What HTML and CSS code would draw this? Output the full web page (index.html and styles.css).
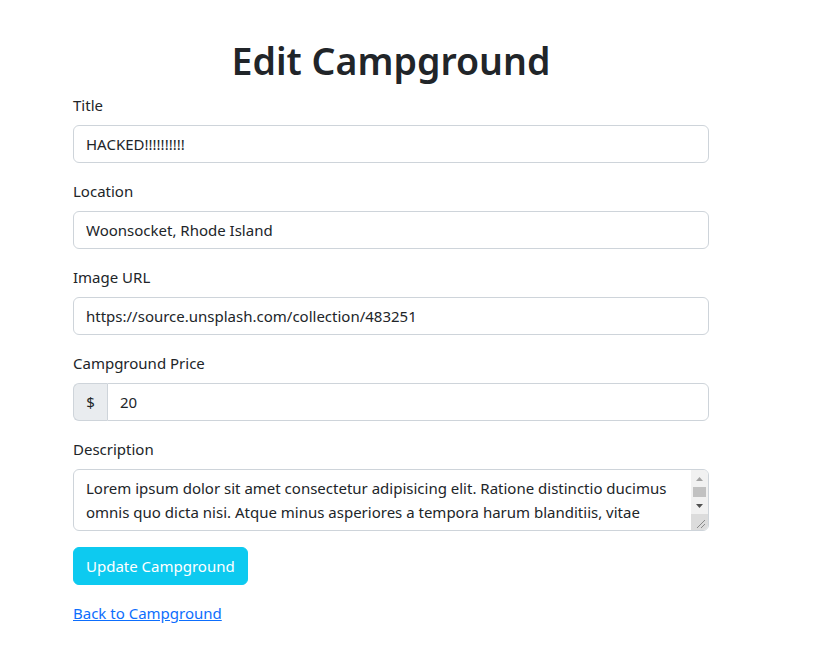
FILE: index.html
```html
<!DOCTYPE html>
<html lang="en">
<head>
<meta charset="utf-8">
<title>Edit Campground</title>
<link rel="stylesheet" href="styles.css">
</head>
<body>
<main class="page">
  <h1 class="page-title">Edit Campground</h1>
  <form class="edit-form">
    <div class="field">
      <label class="field-label" for="title">Title</label>
      <input class="field-input" id="title" type="text" value="HACKED!!!!!!!!!!">
    </div>
    <div class="field">
      <label class="field-label" for="location">Location</label>
      <input class="field-input" id="location" type="text" value="Woonsocket, Rhode Island">
    </div>
    <div class="field">
      <label class="field-label" for="image">Image URL</label>
      <input class="field-input" id="image" type="text" value="https://source.unsplash.com/collection/483251">
    </div>
    <div class="field">
      <label class="field-label" for="price">Campground Price</label>
      <div class="input-group">
        <span class="input-addon">$</span>
        <input class="field-input group-input" id="price" type="text" value="20">
      </div>
    </div>
    <div class="field">
      <label class="field-label" for="description">Description</label>
      <div class="textarea-wrap">
        <textarea class="field-input field-textarea" id="description" rows="2">Lorem ipsum dolor sit amet consectetur adipisicing elit. Ratione distinctio ducimus omnis quo dicta nisi. Atque minus asperiores a tempora harum blanditiis, vitae quisquam eius voluptatibus sint repellendus, fugit nemo iusto tenetur commodi ipsam.</textarea>
        <div class="fake-scrollbar" aria-hidden="true">
          <div class="sb-button">
            <svg width="7" height="4" viewBox="0 0 7 4"><polygon points="3.5,0 7,4 0,4" fill="#a3a3a3"/></svg>
          </div>
          <div class="sb-track"><div class="sb-thumb"></div></div>
          <div class="sb-button">
            <svg width="7" height="4" viewBox="0 0 7 4"><polygon points="0,0 7,0 3.5,4" fill="#505050"/></svg>
          </div>
          <div class="sb-corner">
            <svg width="16" height="16" viewBox="0 0 16 16"><path d="M14 6 L6 14 M14 10 L10 14" stroke="#8a8a8a" stroke-width="1"/></svg>
          </div>
        </div>
      </div>
    </div>
    <div class="actions">
      <button class="btn-update" type="button">Update Campground</button>
    </div>
  </form>
  <a class="back-link" href="#">Back to Campground</a>
</main>
</body>
</html>
```
FILE: styles.css
```css
* { box-sizing: border-box; }
html, body { margin: 0; padding: 0; background: #fff; }
body {
  font-family: "Noto Sans", "Open Sans", sans-serif;
  font-size: 15px;
  line-height: 24px;
  color: #212529;
}
.page {
  width: 636px;
  margin-left: 73px;
  padding-top: 37px;
}
.page-title {
  margin: 0 0 8px;
  text-align: center;
  font-size: 37.5px;
  line-height: 48px;
  font-weight: 600;
}
.edit-form { margin: 0; }
.field { margin-bottom: 16px; }
.field-label {
  display: block;
  margin-bottom: 8px;
}
.field-input {
  display: block;
  width: 100%;
  height: 38px;
  padding: 6px 12px;
  font: inherit;
  color: #212529;
  background: #fff;
  border: 1px solid #ced4da;
  border-radius: 6px;
  outline: none;
}
.input-group { display: flex; }
.input-addon {
  display: flex;
  align-items: center;
  justify-content: center;
  width: 34px;
  height: 38px;
  background: #e9ecef;
  border: 1px solid #ced4da;
  border-right: none;
  border-radius: 6px 0 0 6px;
}
.group-input {
  flex: 1;
  border-radius: 0 6px 6px 0;
}
.textarea-wrap { position: relative; }
.field-textarea {
  height: 62px;
  resize: none;
  overflow: hidden;
  padding-right: 21px;
}
.fake-scrollbar {
  position: absolute;
  top: 1px;
  right: 1px;
  bottom: 1px;
  width: 17px;
  display: flex;
  flex-direction: column;
  background: #f1f1f1;
  border-radius: 0 5px 5px 0;
  overflow: hidden;
}
.sb-button {
  height: 17px;
  display: flex;
  align-items: center;
  justify-content: center;
}
.sb-button svg { display: block; }
.sb-track {
  flex: 1;
  display: flex;
  padding: 0 2px;
}
.sb-thumb {
  flex: 1;
  background: #c1c1c1;
}
.sb-corner {
  height: 16px;
  background: #dcdcdc;
}
.sb-corner svg { display: block; }
.actions { margin-bottom: 16px; }
.btn-update {
  height: 38px;
  padding: 6px 12px;
  font: inherit;
  color: #fff;
  background: #0dcaf0;
  border: 1px solid #0dcaf0;
  border-radius: 6px;
}
.back-link {
  color: #0d6efd;
  text-decoration: underline;
}
```
